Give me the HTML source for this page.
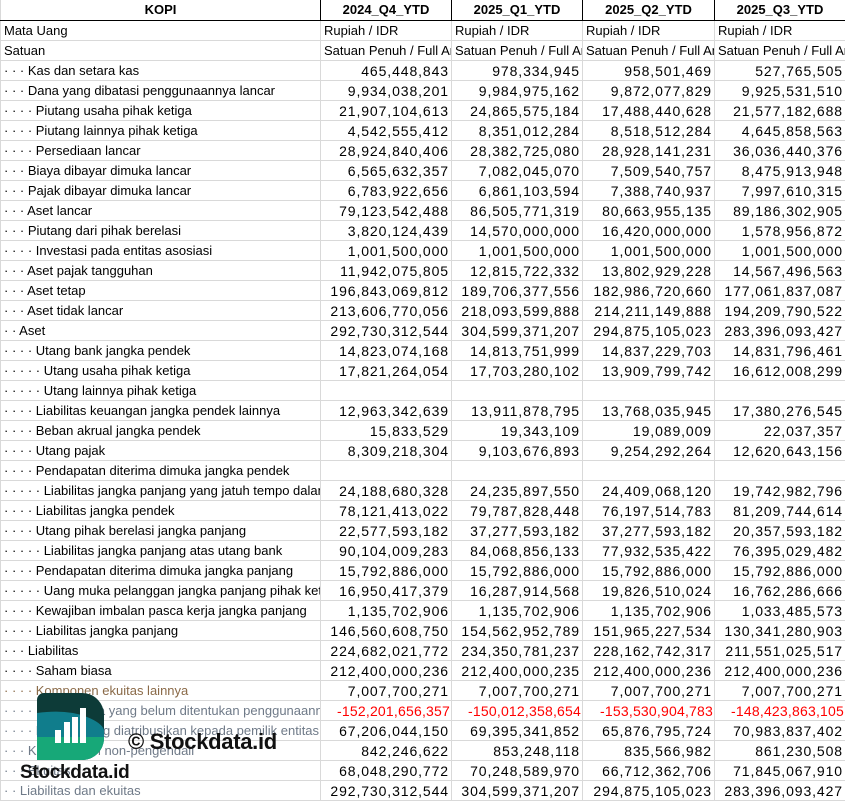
<!DOCTYPE html>
<html><head><meta charset="utf-8"><style>
*{margin:0;padding:0;box-sizing:border-box}
body{width:845px;height:801px;overflow:hidden;background:#fff;font-family:"Liberation Sans",sans-serif;color:#000;position:relative}
table{border-collapse:collapse;table-layout:fixed;width:845px}
td{height:20px;border:1px solid #d9d9d9;font-size:13px;white-space:nowrap;overflow:hidden;padding:1px 3px 0;line-height:18px}
td.n{text-align:right;font-size:14px;letter-spacing:0.9px;padding-right:2px}
td.r{color:#f00;letter-spacing:0.2px;padding-right:1px}
tr.h td{font-weight:bold;text-align:center;border-bottom:1px solid #000;border-right:1px solid #000;border-top:none;padding-top:0}
.g td:first-child{color:#6f7a88}
.b td:first-child{color:#8a6a48}
.wm{position:absolute}
</style></head><body>
<table>
<colgroup><col style="width:320px"><col style="width:131px"><col style="width:131px"><col style="width:132px"><col style="width:131px"></colgroup>
<tr class="h"><td>KOPI</td><td>2024_Q4_YTD</td><td>2025_Q1_YTD</td><td>2025_Q2_YTD</td><td>2025_Q3_YTD</td></tr>
<tr><td>Mata Uang</td><td>Rupiah / IDR</td><td>Rupiah / IDR</td><td>Rupiah / IDR</td><td>Rupiah / IDR</td></tr>
<tr><td>Satuan</td><td>Satuan Penuh / Full Amount</td><td>Satuan Penuh / Full Amount</td><td>Satuan Penuh / Full Amount</td><td>Satuan Penuh / Full Amount</td></tr>
<tr><td>· · · Kas dan setara kas</td><td class="n">465,448,843</td><td class="n">978,334,945</td><td class="n">958,501,469</td><td class="n">527,765,505</td></tr>
<tr><td>· · · Dana yang dibatasi penggunaannya lancar</td><td class="n">9,934,038,201</td><td class="n">9,984,975,162</td><td class="n">9,872,077,829</td><td class="n">9,925,531,510</td></tr>
<tr><td>· · · · Piutang usaha pihak ketiga</td><td class="n">21,907,104,613</td><td class="n">24,865,575,184</td><td class="n">17,488,440,628</td><td class="n">21,577,182,688</td></tr>
<tr><td>· · · · Piutang lainnya pihak ketiga</td><td class="n">4,542,555,412</td><td class="n">8,351,012,284</td><td class="n">8,518,512,284</td><td class="n">4,645,858,563</td></tr>
<tr><td>· · · · Persediaan lancar</td><td class="n">28,924,840,406</td><td class="n">28,382,725,080</td><td class="n">28,928,141,231</td><td class="n">36,036,440,376</td></tr>
<tr><td>· · · Biaya dibayar dimuka lancar</td><td class="n">6,565,632,357</td><td class="n">7,082,045,070</td><td class="n">7,509,540,757</td><td class="n">8,475,913,948</td></tr>
<tr><td>· · · Pajak dibayar dimuka lancar</td><td class="n">6,783,922,656</td><td class="n">6,861,103,594</td><td class="n">7,388,740,937</td><td class="n">7,997,610,315</td></tr>
<tr><td>· · · Aset lancar</td><td class="n">79,123,542,488</td><td class="n">86,505,771,319</td><td class="n">80,663,955,135</td><td class="n">89,186,302,905</td></tr>
<tr><td>· · · Piutang dari pihak berelasi</td><td class="n">3,820,124,439</td><td class="n">14,570,000,000</td><td class="n">16,420,000,000</td><td class="n">1,578,956,872</td></tr>
<tr><td>· · · · Investasi pada entitas asosiasi</td><td class="n">1,001,500,000</td><td class="n">1,001,500,000</td><td class="n">1,001,500,000</td><td class="n">1,001,500,000</td></tr>
<tr><td>· · · Aset pajak tangguhan</td><td class="n">11,942,075,805</td><td class="n">12,815,722,332</td><td class="n">13,802,929,228</td><td class="n">14,567,496,563</td></tr>
<tr><td>· · · Aset tetap</td><td class="n">196,843,069,812</td><td class="n">189,706,377,556</td><td class="n">182,986,720,660</td><td class="n">177,061,837,087</td></tr>
<tr><td>· · · Aset tidak lancar</td><td class="n">213,606,770,056</td><td class="n">218,093,599,888</td><td class="n">214,211,149,888</td><td class="n">194,209,790,522</td></tr>
<tr><td>· · Aset</td><td class="n">292,730,312,544</td><td class="n">304,599,371,207</td><td class="n">294,875,105,023</td><td class="n">283,396,093,427</td></tr>
<tr><td>· · · · Utang bank jangka pendek</td><td class="n">14,823,074,168</td><td class="n">14,813,751,999</td><td class="n">14,837,229,703</td><td class="n">14,831,796,461</td></tr>
<tr><td>· · · · · Utang usaha pihak ketiga</td><td class="n">17,821,264,054</td><td class="n">17,703,280,102</td><td class="n">13,909,799,742</td><td class="n">16,612,008,299</td></tr>
<tr><td>· · · · · Utang lainnya pihak ketiga</td><td></td><td></td><td></td><td></td></tr>
<tr><td>· · · · Liabilitas keuangan jangka pendek lainnya</td><td class="n">12,963,342,639</td><td class="n">13,911,878,795</td><td class="n">13,768,035,945</td><td class="n">17,380,276,545</td></tr>
<tr><td>· · · · Beban akrual jangka pendek</td><td class="n">15,833,529</td><td class="n">19,343,109</td><td class="n">19,089,009</td><td class="n">22,037,357</td></tr>
<tr><td>· · · · Utang pajak</td><td class="n">8,309,218,304</td><td class="n">9,103,676,893</td><td class="n">9,254,292,264</td><td class="n">12,620,643,156</td></tr>
<tr><td>· · · · Pendapatan diterima dimuka jangka pendek</td><td></td><td></td><td></td><td></td></tr>
<tr><td>· · · · · Liabilitas jangka panjang yang jatuh tempo dalam satu tahun</td><td class="n">24,188,680,328</td><td class="n">24,235,897,550</td><td class="n">24,409,068,120</td><td class="n">19,742,982,796</td></tr>
<tr><td>· · · · Liabilitas jangka pendek</td><td class="n">78,121,413,022</td><td class="n">79,787,828,448</td><td class="n">76,197,514,783</td><td class="n">81,209,744,614</td></tr>
<tr><td>· · · · Utang pihak berelasi jangka panjang</td><td class="n">22,577,593,182</td><td class="n">37,277,593,182</td><td class="n">37,277,593,182</td><td class="n">20,357,593,182</td></tr>
<tr><td>· · · · · Liabilitas jangka panjang atas utang bank</td><td class="n">90,104,009,283</td><td class="n">84,068,856,133</td><td class="n">77,932,535,422</td><td class="n">76,395,029,482</td></tr>
<tr><td>· · · · Pendapatan diterima dimuka jangka panjang</td><td class="n">15,792,886,000</td><td class="n">15,792,886,000</td><td class="n">15,792,886,000</td><td class="n">15,792,886,000</td></tr>
<tr><td>· · · · · Uang muka pelanggan jangka panjang pihak ketiga</td><td class="n">16,950,417,379</td><td class="n">16,287,914,568</td><td class="n">19,826,510,024</td><td class="n">16,762,286,666</td></tr>
<tr><td>· · · · Kewajiban imbalan pasca kerja jangka panjang</td><td class="n">1,135,702,906</td><td class="n">1,135,702,906</td><td class="n">1,135,702,906</td><td class="n">1,033,485,573</td></tr>
<tr><td>· · · · Liabilitas jangka panjang</td><td class="n">146,560,608,750</td><td class="n">154,562,952,789</td><td class="n">151,965,227,534</td><td class="n">130,341,280,903</td></tr>
<tr><td>· · · Liabilitas</td><td class="n">224,682,021,772</td><td class="n">234,350,781,237</td><td class="n">228,162,742,317</td><td class="n">211,551,025,517</td></tr>
<tr><td>· · · · Saham biasa</td><td class="n">212,400,000,236</td><td class="n">212,400,000,235</td><td class="n">212,400,000,236</td><td class="n">212,400,000,236</td></tr>
<tr class="b"><td>· · · · Komponen ekuitas lainnya</td><td class="n">7,007,700,271</td><td class="n">7,007,700,271</td><td class="n">7,007,700,271</td><td class="n">7,007,700,271</td></tr>
<tr class="g"><td>· · · · · Saldo laba yang belum ditentukan penggunaannya</td><td class="n r">-152,201,656,357</td><td class="n r">-150,012,358,654</td><td class="n r">-153,530,904,783</td><td class="n r">-148,423,863,105</td></tr>
<tr class="g"><td>· · · · Ekuitas yang diatribusikan kepada pemilik entitas induk</td><td class="n">67,206,044,150</td><td class="n">69,395,341,852</td><td class="n">65,876,795,724</td><td class="n">70,983,837,402</td></tr>
<tr class="g"><td>· · · Kepentingan non-pengendali</td><td class="n">842,246,622</td><td class="n">853,248,118</td><td class="n">835,566,982</td><td class="n">861,230,508</td></tr>
<tr class="g"><td>· · · Ekuitas</td><td class="n">68,048,290,772</td><td class="n">70,248,589,970</td><td class="n">66,712,362,706</td><td class="n">71,845,067,910</td></tr>
<tr class="g"><td>· · Liabilitas dan ekuitas</td><td class="n">292,730,312,544</td><td class="n">304,599,371,207</td><td class="n">294,875,105,023</td><td class="n">283,396,093,427</td></tr>
</table>
<svg class="wm" style="left:37px;top:693px" width="67" height="67" viewBox="0 0 67 67">
<defs><clipPath id="c"><path d="M7 0H45A22 22 0 0 1 67 22V45A22 22 0 0 1 45 67H0V7A7 7 0 0 1 7 0Z"/></clipPath></defs>
<g clip-path="url(#c)">
<rect width="67" height="67" fill="#0d3b38"/>
<path d="M0 20Q30 16 50 24T67 42V67H0Z" fill="#107d8c"/>
<path d="M0 44H67V67H0Z" fill="#17a878"/>
</g>
<rect x="18" y="37" width="6" height="13" fill="#fff"/>
<rect x="27" y="29" width="6" height="21" fill="#fff"/>
<rect x="35" y="24" width="6" height="26" fill="#fff"/>
<rect x="43" y="15" width="6" height="35" fill="#fff"/>
</svg>
<div class="wm" style="left:20px;top:762px;font-weight:bold;font-size:19px;color:#111;letter-spacing:-0.3px">Stockdata.id</div>
<div class="wm" style="left:128px;top:729px;font-weight:bold;font-size:22px;color:#111;letter-spacing:-0.3px">© Stockdata.id</div>
</body></html>
